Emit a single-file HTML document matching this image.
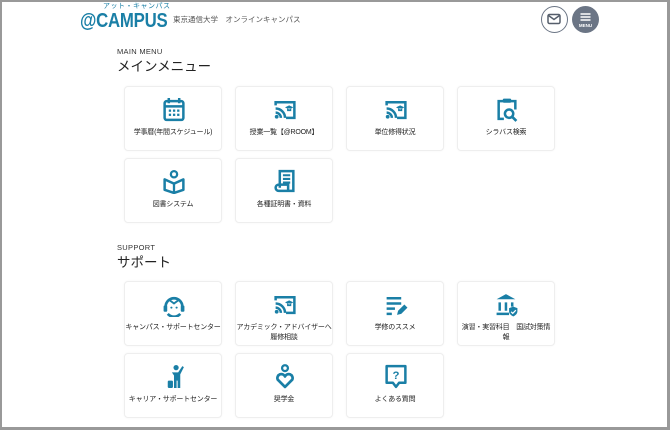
<!DOCTYPE html>
<html><head><meta charset="utf-8"><style>
*{margin:0;padding:0;box-sizing:border-box}
body{width:670px;height:430px;overflow:hidden;background:#fff;font-family:"Liberation Sans","Noto Sans CJK JP",sans-serif;color:#333}
.frame{position:absolute;left:0;top:0;width:670px;height:430px;border:2px solid #999;border-right-width:3px;border-bottom-width:3px}
.logo{position:absolute;left:80px;top:11px;font-weight:bold;color:#1a7fa6;font-size:20px;line-height:20px;letter-spacing:-0.3px;transform:scaleX(0.84);transform-origin:left top;white-space:nowrap}
.kana{position:absolute;left:103px;top:2px;font-size:7px;line-height:9px;color:#1a7fa6;letter-spacing:0.5px;white-space:nowrap}
.sub{position:absolute;left:173px;top:14px;font-size:7.5px;color:#555;white-space:nowrap}
.btn{position:absolute;top:6px;width:27px;height:27px;border-radius:50%}
.sec{position:absolute;left:117px}
.sec .en{font-size:7.5px;color:#333;letter-spacing:.3px}
.sec .ja{font-size:13.5px;color:#222;margin-top:-1px}
.card{position:absolute;width:98px;height:65px;border:1px solid #eee;border-radius:4px;background:#fff;box-shadow:0 0 2px rgba(0,0,0,.04)}
.card svg{position:absolute;left:37px;top:10px;width:24px;height:25px}
.card .t{position:absolute;left:-4px;right:-4px;top:41px;text-align:center;font-size:7px;line-height:10px;color:#222;white-space:nowrap;letter-spacing:-0.2px}
</style></head><body>
<div class="frame"></div>
<div class="kana">アット・キャンパス</div>
<div class="logo">@CAMPUS</div>
<div class="sub">東京通信大学　オンラインキャンパス</div>
<div class="btn" style="left:541px;border:1.5px solid #6b7585;background:#fff">
<svg width="24" height="24" viewBox="0 0 24 24" style="position:absolute;left:0;top:0"><rect x="6" y="7.5" width="12" height="9" rx="1.5" fill="none" stroke="#555e6b" stroke-width="1.5"/><path d="M6.5 8.5l5.5 4 5.5-4" fill="none" stroke="#555e6b" stroke-width="1.5"/></svg></div>
<div class="btn" style="left:572px;background:#6b7585">
<svg width="27" height="27" viewBox="0 0 27 27" style="position:absolute;left:0;top:0"><path d="M8.5 8h10M8.5 11h10M8.5 14h10" stroke="#fff" stroke-width="1.4"/><text x="13.5" y="21" font-size="4.5" fill="#fff" text-anchor="middle" font-weight="bold" font-family="Liberation Sans">MENU</text></svg></div>

<div class="sec" style="top:47px"><div class="en">MAIN MENU</div><div class="ja">メインメニュー</div></div>
<div class="sec" style="top:243px"><div class="en">SUPPORT</div><div class="ja">サポート</div></div>

<div class="card" style="left:124px;top:86px"><svg viewBox="0 0 22 24"><rect x="2" y="4" width="18" height="18" rx="2" fill="none" stroke="#1a7fa6" stroke-width="2.4"/><path d="M6 1v5M16 1v5M2 9h18" stroke="#1a7fa6" stroke-width="2.4"/><g fill="#1a7fa6"><rect x="6" y="12" width="2.2" height="2.2"/><rect x="10" y="12" width="2.2" height="2.2"/><rect x="14" y="12" width="2.2" height="2.2"/><rect x="6" y="16" width="2.2" height="2.2"/><rect x="10" y="16" width="2.2" height="2.2"/><rect x="14" y="16" width="2.2" height="2.2"/></g></svg><div class="t">学事暦(年間スケジュール)</div></div>
<div class="card" style="left:235px;top:86px"><svg viewBox="0 0 22 24"><path d="M2 8V5h18v15h-8" fill="none" stroke="#1a7fa6" stroke-width="2.4"/><path d="M2 11a9 9 0 0 1 9 9M2 15a5 5 0 0 1 5 5" fill="none" stroke="#1a7fa6" stroke-width="2.4"/><circle cx="3" cy="19" r="1.8" fill="#1a7fa6"/><path d="M11 10l4-2 4 2-4 2z M13 11v2.5h4V11" fill="#1a7fa6"/></svg><div class="t">授業一覧【@ROOM】</div></div>
<div class="card" style="left:346px;top:86px"><svg viewBox="0 0 22 24"><path d="M2 8V5h18v15h-8" fill="none" stroke="#1a7fa6" stroke-width="2.4"/><path d="M2 11a9 9 0 0 1 9 9M2 15a5 5 0 0 1 5 5" fill="none" stroke="#1a7fa6" stroke-width="2.4"/><circle cx="3" cy="19" r="1.8" fill="#1a7fa6"/><path d="M11 10l4-2 4 2-4 2z M13 11v2.5h4V11" fill="#1a7fa6"/></svg><div class="t">単位修得状況</div></div>
<div class="card" style="left:457px;top:86px"><svg viewBox="0 0 22 24"><path d="M8 21H3V4h16v8" fill="none" stroke="#1a7fa6" stroke-width="2.4"/><rect x="7" y="1.5" width="8" height="4" rx="1" fill="#1a7fa6"/><circle cx="13" cy="16" r="4" fill="none" stroke="#1a7fa6" stroke-width="2.4"/><path d="M16 19l4 4" stroke="#1a7fa6" stroke-width="2.6"/></svg><div class="t">シラバス検索</div></div>
<div class="card" style="left:124px;top:158px"><svg viewBox="0 0 22 24"><circle cx="11" cy="5" r="3" fill="none" stroke="#1a7fa6" stroke-width="2.2"/><path d="M2 10l9 4 9-4v10l-9 3-9-3z" fill="none" stroke="#1a7fa6" stroke-width="2.4" stroke-linejoin="round"/><path d="M11 14v9" stroke="#1a7fa6" stroke-width="2.2"/></svg><div class="t">図書システム</div></div>
<div class="card" style="left:235px;top:158px"><svg viewBox="0 0 22 24"><path d="M6 18V2h13v19H5a3 3 0 0 1 0-6h9v6" fill="none" stroke="#1a7fa6" stroke-width="2.4"/><path d="M9 6h7M9 9.5h7M9 13h7" stroke="#1a7fa6" stroke-width="2"/></svg><div class="t">各種証明書・資料</div></div>
<div class="card" style="left:124px;top:281px"><svg viewBox="0 0 22 24"><path d="M3 14a8 8 0 0 1 16 0M5 21a8 8 0 0 0 12 0" fill="none" stroke="#1a7fa6" stroke-width="2.6"/><path d="M7 8l4 3 4-3" fill="none" stroke="#1a7fa6" stroke-width="1.8"/><rect x="1" y="13" width="3.5" height="6" rx="1" fill="#1a7fa6"/><rect x="17.5" y="13" width="3.5" height="6" rx="1" fill="#1a7fa6"/><circle cx="8.5" cy="15" r="1" fill="#1a7fa6"/><circle cx="13.5" cy="15" r="1" fill="#1a7fa6"/></svg><div class="t">キャンパス・サポートセンター</div></div>
<div class="card" style="left:235px;top:281px"><svg viewBox="0 0 22 24"><path d="M2 8V5h18v15h-8" fill="none" stroke="#1a7fa6" stroke-width="2.4"/><path d="M2 11a9 9 0 0 1 9 9M2 15a5 5 0 0 1 5 5" fill="none" stroke="#1a7fa6" stroke-width="2.4"/><circle cx="3" cy="19" r="1.8" fill="#1a7fa6"/><path d="M11 10l4-2 4 2-4 2z M13 11v2.5h4V11" fill="#1a7fa6"/></svg><div class="t">アカデミック・アドバイザーへ<br>履修相談</div></div>
<div class="card" style="left:346px;top:281px"><svg viewBox="0 0 22 24"><path d="M2 6h14M2 11h14M2 16h8M2 21h5" stroke="#1a7fa6" stroke-width="2.4"/><path d="M12 22l1-4 6-6 3 3-6 6z" fill="#1a7fa6"/></svg><div class="t">学修のススメ</div></div>
<div class="card" style="left:457px;top:281px"><svg viewBox="0 0 22 24"><path d="M1 7l9-5 9 5z" fill="#1a7fa6"/><path d="M4 10v8M10 10v8M16 10v4M1 21h12" stroke="#1a7fa6" stroke-width="2.4"/><path d="M17 14l4 1.5v3c0 2.5-2 4-4 5-2-1-4-2.5-4-5v-3z" fill="#1a7fa6"/><path d="M15 19l1.5 1.5 3-3" stroke="#fff" stroke-width="1.2" fill="none"/></svg><div class="t">演習・実習科目　国試対策情<br>報</div></div>
<div class="card" style="left:124px;top:353px"><svg viewBox="0 0 22 24"><circle cx="13" cy="3.5" r="2.5" fill="#1a7fa6"/><path d="M9 8h6l4-6 1.5 1L17 10v13h-2.5v-7h-1v7H11V11" fill="#1a7fa6"/><rect x="5" y="16" width="5" height="7" rx="1" fill="#1a7fa6"/></svg><div class="t">キャリア・サポートセンター</div></div>
<div class="card" style="left:235px;top:353px"><svg viewBox="0 0 22 24"><circle cx="11" cy="4" r="2.8" fill="none" stroke="#1a7fa6" stroke-width="2.2"/><path d="M11 22l-7-7a3.6 3.6 0 0 1 7-3 3.6 3.6 0 0 1 7 3z" fill="none" stroke="#1a7fa6" stroke-width="2.6" stroke-linejoin="round"/></svg><div class="t">奨学金</div></div>
<div class="card" style="left:346px;top:353px"><svg viewBox="0 0 22 24"><path d="M2 2h18v16h-6l-3 4-3-4H2z" fill="none" stroke="#1a7fa6" stroke-width="2.4" stroke-linejoin="round"/><text x="11" y="14.5" font-size="11" font-weight="bold" fill="#1a7fa6" text-anchor="middle" font-family="Liberation Sans">?</text></svg><div class="t">よくある質問</div></div>
</body></html>
